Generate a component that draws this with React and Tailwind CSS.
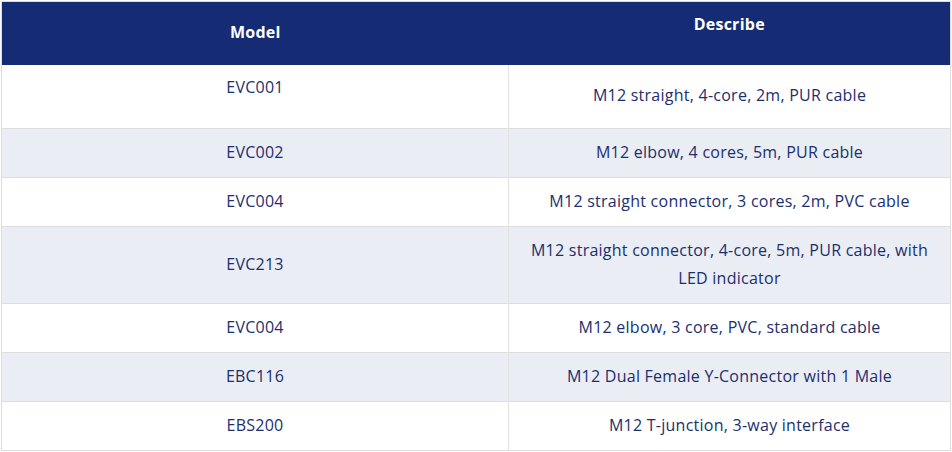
const rows = [
  { model: 'EVC001', desc: 'M12 straight, 4-core, 2m, PUR cable', h: 'h-[64px]', top: true },
  { model: 'EVC002', desc: 'M12 elbow, 4 cores, 5m, PUR cable', h: 'h-[49px]' },
  { model: 'EVC004', desc: 'M12 straight connector, 3 cores, 2m, PVC cable', h: 'h-[49px]' },
  { model: 'EVC213', desc: ['M12 straight connector, 4-core, 5m, PUR cable, with', 'LED indicator'], h: 'h-[77px]' },
  { model: 'EVC004', desc: 'M12 elbow, 3 core, PVC, standard cable', h: 'h-[49px]' },
  { model: 'EBC116', desc: 'M12 Dual Female Y-Connector with 1 Male', h: 'h-[49px]' },
  { model: 'EBS200', desc: 'M12 T-junction, 3-way interface', h: 'h-[49px]' },
];

export default function App() {
  return (
    <div className="w-[952px] h-[452px] bg-white pt-px pl-px font-['Open_Sans',sans-serif]">
      <table className="w-[950px] border-collapse border border-[#dddddd] text-[16px] tracking-[0.25px] leading-[28px] text-[#1c2f6e]">
        <colgroup>
          <col className="w-[507px]" />
          <col />
        </colgroup>
        <thead>
          <tr className="h-[63px] bg-[#152c74] text-white shadow-[0_2px_4px_rgba(0,0,0,0.08)]">
            <th className="align-middle font-bold pb-[2px]">Model</th>
            <th className="align-top pt-[8px] font-bold">Describe</th>
          </tr>
        </thead>
        <tbody>
          {rows.map((r, i) => (
            <tr
              key={i}
              className={`${r.h} border-b border-[#dddddd] ${i % 2 === 1 ? 'bg-[#eaedf4]' : 'bg-white'}`}
            >
              <td className={`text-center border-r border-[#e2e2e2] ${r.top ? 'align-top pt-[8px]' : 'align-middle pb-[2px]'}`}>
                {r.model}
              </td>
              <td className="text-center align-middle px-4 pb-[2px]">
                {Array.isArray(r.desc) ? r.desc.map((l) => <div key={l}>{l}</div>) : r.desc}
              </td>
            </tr>
          ))}
        </tbody>
      </table>
    </div>
  );
}
